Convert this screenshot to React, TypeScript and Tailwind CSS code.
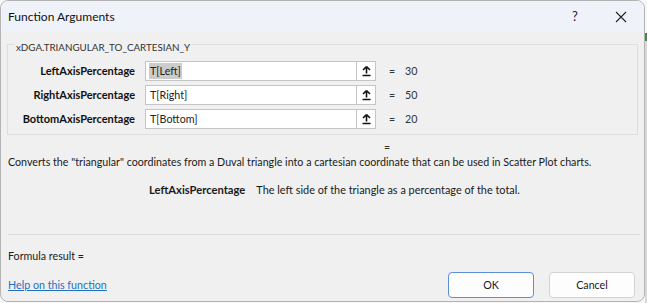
import React from "react";

const FONT = "font-['Lato','Noto_Sans',sans-serif]";

function UploadIcon() {
  return (
    <svg width="11" height="12" viewBox="0 0 11 12" fill="none">
      <path d="M5.5 1.5 L2 5 M5.5 1.5 L9 5 M5.5 1.5 V8.5" stroke="#111" strokeWidth="1.6" />
      <path d="M1.5 10.5 H9.5" stroke="#111" strokeWidth="1.6" />
    </svg>
  );
}

function ArgRow({ label, value, result, selected }: { label: string; value: string; result: string; selected?: boolean }) {
  return (
    <div className="flex items-center h-[20px]">
      <div className="w-[127px] text-right font-bold text-[11px] text-[#111]">{label}</div>
      <div className="ml-[10px] w-[231px] h-[20px] flex bg-white border border-[#c4c4c4]">
        <div className="flex-1 flex items-center pl-[3px] text-[10.7px] text-[#222]">
          <span className={selected ? "bg-[#cccccc] px-[1px]" : "px-[1px]"}>{value}</span>
        </div>
        <div className="w-[19px] flex items-center justify-center border-l border-[#c4c4c4] bg-white">
          <UploadIcon />
        </div>
      </div>
      <div className="ml-[13px] w-[16px] text-[10.7px] text-[#333]">=</div>
      <div className="text-[10.7px] text-[#333]">{result}</div>
    </div>
  );
}

export default function App() {
  return (
    <div className={`w-[647px] h-[303px] bg-[#f7f7f7] flex ${FONT}`}>
      <div className="w-[645px] h-[302px] flex flex-col rounded-[8px] border border-[#b4b4b4] bg-[#f0f0f0] overflow-hidden">
        {/* title bar */}
        <div className="h-[31px] flex items-center bg-[#eff2f9]">
          <div className="pl-[7px] text-[12px] text-[#111] flex-1">Function Arguments</div>
          <div className="w-[46px] h-full flex items-center justify-center text-[13px] text-[#222]">?</div>
          <div className="w-[46px] h-full flex items-center justify-center">
            <svg width="12" height="12" viewBox="0 0 12 12">
              <path d="M1 1 L11 11 M11 1 L1 11" stroke="#222" strokeWidth="1.1" />
            </svg>
          </div>
        </div>
        {/* body */}
        <div className="flex-1 flex flex-col">
          <fieldset className="mt-[3px] ml-[6px] mr-[6px] border border-[#dedede] px-0 pb-[5px]">
            <legend className="ml-[6px] px-[2px] pt-[6px] leading-[12px] text-[9.8px] text-[#333]">xDGA.TRIANGULAR_TO_CARTESIAN_Y</legend>
            <div className="flex flex-col gap-[4px] pt-[8px]">
              <ArgRow label="LeftAxisPercentage" value="T[Left]" result="30" selected />
              <ArgRow label="RightAxisPercentage" value="T[Right]" result="50" />
              <ArgRow label="BottomAxisPercentage" value="T[Bottom]" result="20" />
            </div>
          </fieldset>
          <div className="mt-[5px] h-[14px] pl-[383px] text-[10.7px] text-[#333] leading-[14px]">=</div>
          <div className="mt-[1px] pl-[7px] h-[14px] leading-[14px] text-[10.7px] text-[#1a1a1a]">
            Converts the "triangular" coordinates from a Duval triangle into a cartesian coordinate that can be used in Scatter Plot charts.
          </div>
          <div className="mt-[14px] pl-[148px] h-[14px] leading-[14px] text-[10.7px] text-[#1a1a1a] flex items-center">
            <span className="font-bold text-[11.2px]">LeftAxisPercentage</span>
            <span className="ml-[11px] text-[10.9px]">The left side of the triangle as a percentage of the total.</span>
          </div>
          <div className="mt-[37px] ml-[7px] mr-[4px] h-px bg-[#dcdcdc]" />
          <div className="mt-[14px] pl-[7px] h-[14px] leading-[14px] text-[10.7px] text-[#1a1a1a]">Formula result =</div>
          <div className="mt-[9px] flex items-center h-[26px] pl-[7px] pr-[9px]">
            <div className="flex-1 text-[10.7px] text-[#1f6fc5] underline">Help on this function</div>
            <div className="w-[86px] h-[26px] flex items-center justify-center rounded-[4px] border border-[#5b8ed6] bg-[#fdfdfd] text-[10.7px] text-[#1a1a1a]">OK</div>
            <div className="ml-[15px] w-[86px] h-[26px] flex items-center justify-center rounded-[4px] border border-[#d2d2d2] bg-[#fdfdfd] text-[10.7px] text-[#1a1a1a]">Cancel</div>
          </div>
        </div>
      </div>
      <div className="w-[2px] flex flex-col">
        <div className="h-[33px]" />
        <div className="h-[8px] bg-[#3f8a4a]" />
        <div className="flex-1 bg-[#d8d8d8]" />
      </div>
    </div>
  );
}
